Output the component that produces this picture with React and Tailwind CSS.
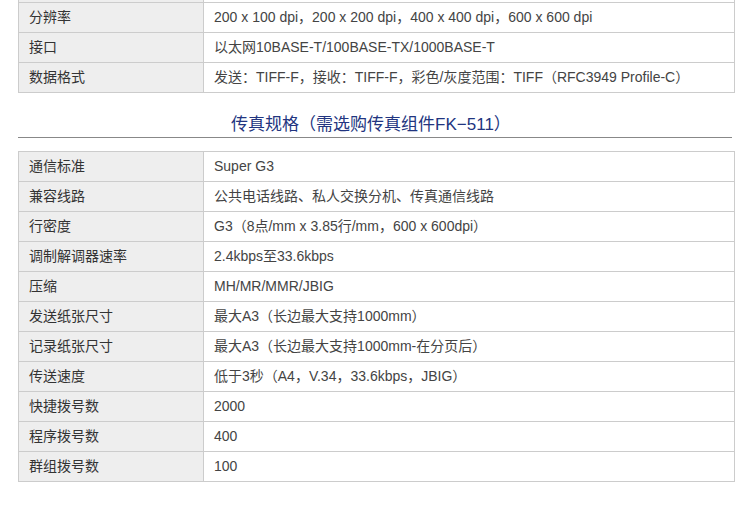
import React from "react";

const topRows = [
  ["分辨率", "200 x 100 dpi，200 x 200 dpi，400 x 400 dpi，600 x 600 dpi"],
  ["接口", "以太网10BASE-T/100BASE-TX/1000BASE-T"],
  ["数据格式", "发送：TIFF-F，接收：TIFF-F，彩色/灰度范围：TIFF（RFC3949 Profile-C）"],
];

const faxRows = [
  ["通信标准", "Super G3"],
  ["兼容线路", "公共电话线路、私人交换分机、传真通信线路"],
  ["行密度", "G3（8点/mm x 3.85行/mm，600 x 600dpi）"],
  ["调制解调器速率", "2.4kbps至33.6kbps"],
  ["压缩", "MH/MR/MMR/JBIG"],
  ["发送纸张尺寸", "最大A3（长边最大支持1000mm）"],
  ["记录纸张尺寸", "最大A3（长边最大支持1000mm-在分页后）"],
  ["传送速度", "低于3秒（A4，V.34，33.6kbps，JBIG）"],
  ["快捷拨号数", "2000"],
  ["程序拨号数", "400"],
  ["群组拨号数", "100"],
];

const SpecRow = ({ label, value }) => (
  <tr>
    <td className="w-[185px] h-[30px] border border-[#cccccc] bg-[#eeeeee] pl-[10px] text-[#333333] p-0">
      {label}
    </td>
    <td className="h-[30px] border border-[#cccccc] bg-white pl-[10px] text-[#444444] p-0">
      {value}
    </td>
  </tr>
);

export default function App() {
  return (
    <div
      className="w-[750px] h-[505px] bg-white overflow-hidden pl-[18px] text-[14px] leading-[20px]"
      style={{ fontFamily: '"Liberation Sans", Arial, "Noto Sans CJK SC", sans-serif' }}
    >
      <table className="w-[717px] border-collapse">
        <tbody>
          <tr>
            <td className="w-[185px] h-[2px] p-0 border-x border-[#cccccc] bg-[#eeeeee]"></td>
            <td className="h-[2px] p-0 border-x border-[#cccccc] bg-white"></td>
          </tr>
          {topRows.map(([l, v]) => (
            <SpecRow key={l} label={l} value={v} />
          ))}
        </tbody>
      </table>

      <div className="mt-[22px] w-[714px] border-b border-[#888888] pb-[2px] text-center pr-[8px]">
        <span className="text-[17px] leading-[20px] text-[#223580]">
          传真规格（需选购传真组件FK−511）
        </span>
      </div>

      <table className="mt-[13px] w-[717px] border-collapse">
        <tbody>
          {faxRows.map(([l, v]) => (
            <SpecRow key={l} label={l} value={v} />
          ))}
        </tbody>
      </table>
    </div>
  );
}
